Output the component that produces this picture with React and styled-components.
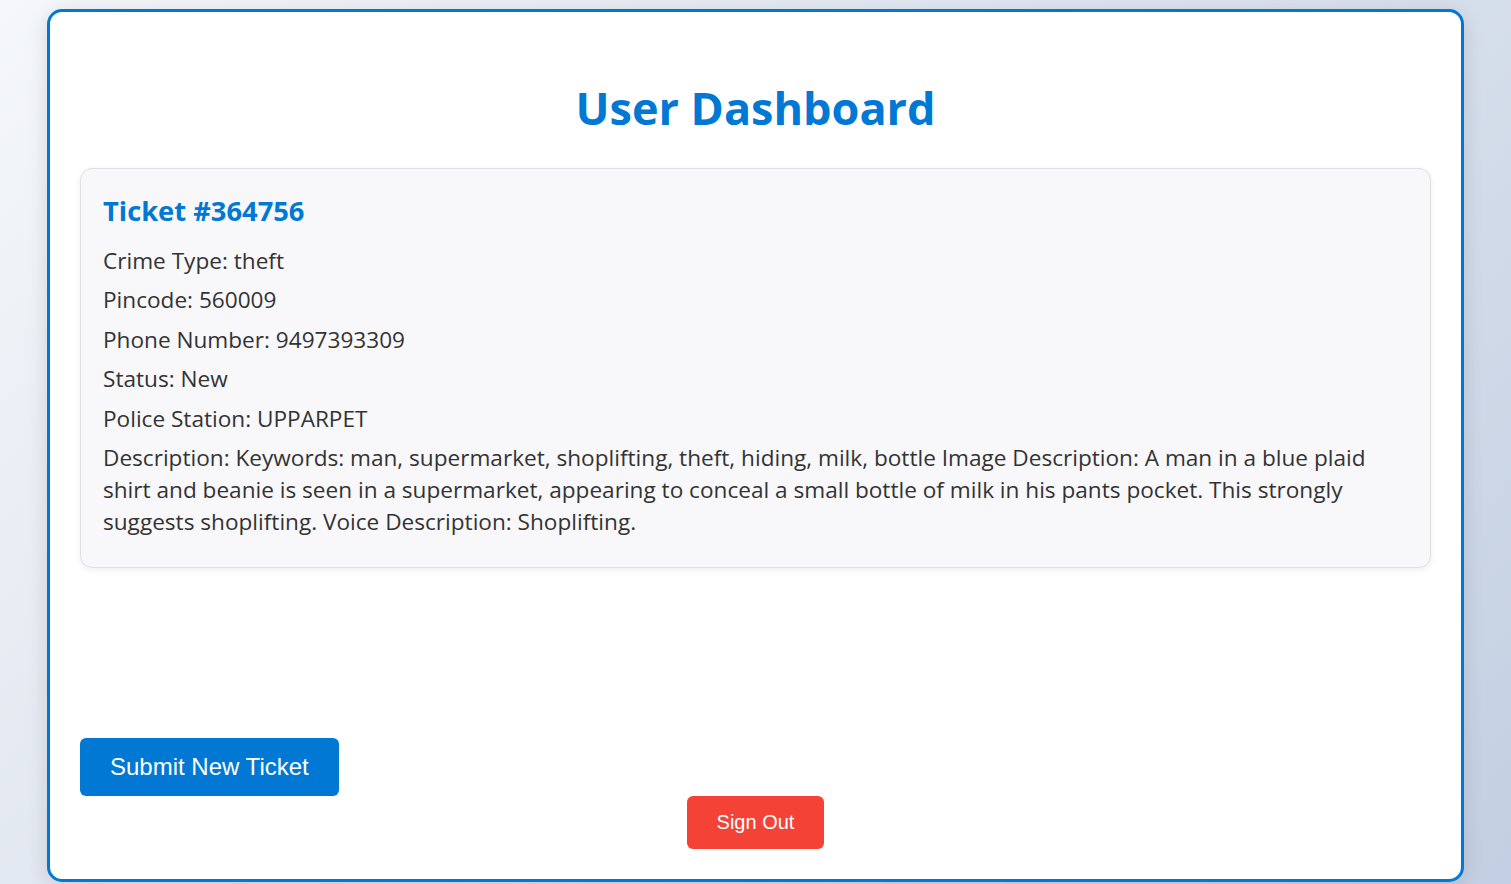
import React from 'react'
import styled, { createGlobalStyle } from 'styled-components'

const GlobalStyle = createGlobalStyle`
    * { box-sizing: border-box; }
    body {
        margin: 0;
        min-height: 100vh;
        font-family: "Open Sans", "Noto Sans", sans-serif;
        background: linear-gradient(135deg, #f5f7fa 0%, #c3cfe2 100%);
        overflow: hidden;
    }
`;

const ticket = {
    id: 364756,
    crimeType: 'theft',
    pincode: '560009',
    phone: '9497393309',
    status: 'New',
    station: 'UPPARPET',
    description:
        'Keywords: man, supermarket, shoplifting, theft, hiding, milk, bottle Image Description: A man in a blue plaid shirt and beanie is seen in a supermarket, appearing to conceal a small bottle of milk in his pants pocket. This strongly suggests shoplifting. Voice Description: Shoplifting.',
}

const App = () => {
  return (
    <>
      <GlobalStyle />
      <Page>
        <Container>
          <Title>User Dashboard</Title>
          <TicketCard>
            <TicketTitle>Ticket #{ticket.id}</TicketTitle>
            <Field>Crime Type: {ticket.crimeType}</Field>
            <Field>Pincode: {ticket.pincode}</Field>
            <Field>Phone Number: {ticket.phone}</Field>
            <Field>Status: {ticket.status}</Field>
            <Field>Police Station: {ticket.station}</Field>
            <Field>Description: {ticket.description}</Field>
          </TicketCard>
          <Actions>
            <SubmitRow>
              <Button color="#0078d4" size="24px">Submit New Ticket</Button>
            </SubmitRow>
            <SignOutRow>
              <Button color="#f44336" size="20px">Sign Out</Button>
            </SignOutRow>
          </Actions>
        </Container>
      </Page>
    </>
  )
}

export default App

const Page = styled.div`
    width:100%;
    padding-top:9px;
    display:flex;
    justify-content:center;
`;
const Container = styled.div`
    width:1417px;
    height:873px;
    background:#fff;
    border:3px solid #0078d4;
    border-radius:15px;
    box-shadow:0 4px 20px rgba(0,0,0,0.12);
    padding:30px;
    display:flex;
    flex-direction:column;
`;
const Title = styled.h1`
    margin:38px 0 33px;
    text-align:center;
    color:#0078d4;
    font-size:45px;
    line-height:55px;
    font-weight:700;
`;
const TicketCard = styled.div`
    background:#f8f8fa;
    border:1px solid #e0e0e0;
    border-radius:12px;
    box-shadow:0 2px 6px rgba(0,0,0,0.07);
    padding:24px 22px 21px 22px;
`;
const TicketTitle = styled.h3`
    margin:2px 0 17px;
    color:#0078d4;
    font-size:27.3px;
    line-height:1.2;
    font-weight:700;
`;
const Field = styled.p`
    margin:7.5px 0;
    color:#333;
    font-size:22.6px;
    line-height:32px;
`;
const Actions = styled.div`
    margin-top:auto;
    display:flex;
    flex-direction:column;
`;
const SubmitRow = styled.div`
    display:flex;
    justify-content:flex-start;
`;
const SignOutRow = styled.div`
    display:flex;
    justify-content:center;
`;
const Button = styled.button`
    background:${p => p.color};
    color:#fff;
    border:none;
    border-radius:6px;
    padding:15px 30px;
    font-family:"Liberation Sans", Arial, sans-serif;
    font-size:${p => p.size};
    line-height:1.15;
    cursor:pointer;
`;
